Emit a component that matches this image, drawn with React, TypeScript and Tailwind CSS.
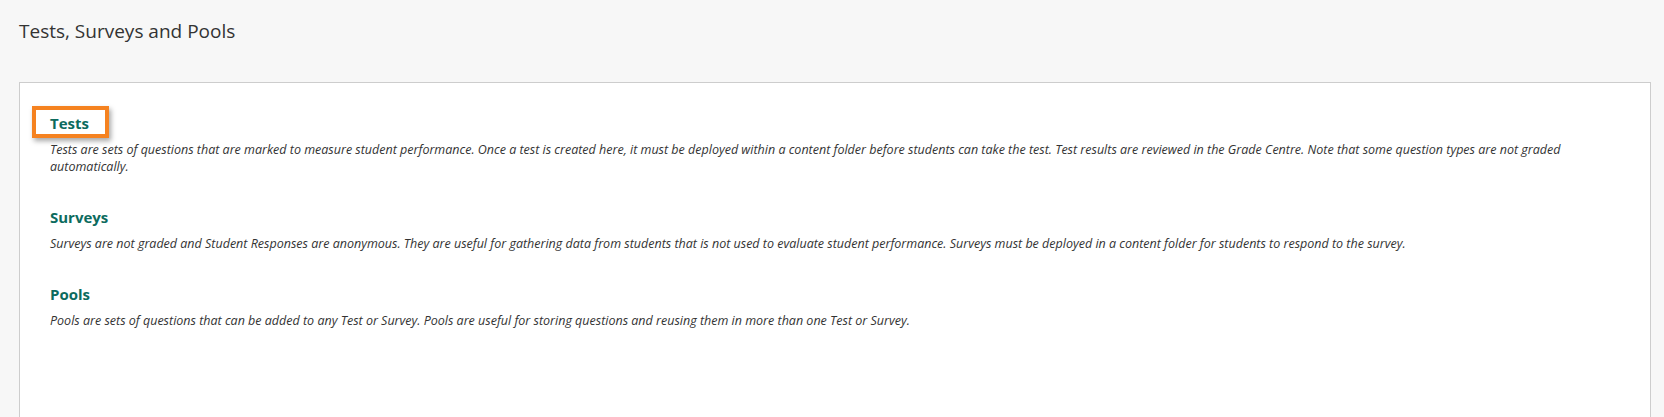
import React from 'react';

interface Section {
  title: string;
  text: string;
  highlighted?: boolean;
}

const sections: Section[] = [
  {
    title: 'Tests',
    text: 'Tests are sets of questions that are marked to measure student performance. Once a test is created here, it must be deployed within a content folder before students can take the test. Test results are reviewed in the Grade Centre. Note that some question types are not graded automatically.',
    highlighted: true,
  },
  {
    title: 'Surveys',
    text: 'Surveys are not graded and Student Responses are anonymous. They are useful for gathering data from students that is not used to evaluate student performance. Surveys must be deployed in a content folder for students to respond to the survey.',
  },
  {
    title: 'Pools',
    text: 'Pools are sets of questions that can be added to any Test or Survey. Pools are useful for storing questions and reusing them in more than one Test or Survey.',
  },
];

const App: React.FC = () => {
  return (
    <div
      className="min-h-screen bg-[#f7f7f7] pl-[19px] pr-[13px] pt-[19px]"
      style={{ fontFamily: '"Open Sans", "Noto Sans", sans-serif' }}
    >
      <h1 className="text-[19px] leading-[24px] font-normal text-[#333333]">Tests, Surveys and Pools</h1>

      <div className="mt-[39px] h-[400px] bg-white border border-[#cdcdcd] pl-[30px] pr-[30px] pt-[30px]">
        <ul className="flex flex-col gap-[32px]">
          {sections.map(s => (
            <li key={s.title}>
              <h3 className="text-[15px] leading-[20px] font-bold text-[#0c6b5e]">
                <span className="relative inline-block">
                  {s.title}
                  {s.highlighted && (
                    <span className="absolute -left-[18px] -right-[20px] -top-[7px] -bottom-[5px] border-4 border-[#f58220] shadow-[2px_3px_5px_rgba(0,0,0,0.35)]"></span>
                  )}
                </span>
              </h3>
              <p className="mt-[8px] text-[12.5px] leading-[17px] italic text-[#333333]">{s.text}</p>
            </li>
          ))}
        </ul>
      </div>
    </div>
  );
};

export default App;
